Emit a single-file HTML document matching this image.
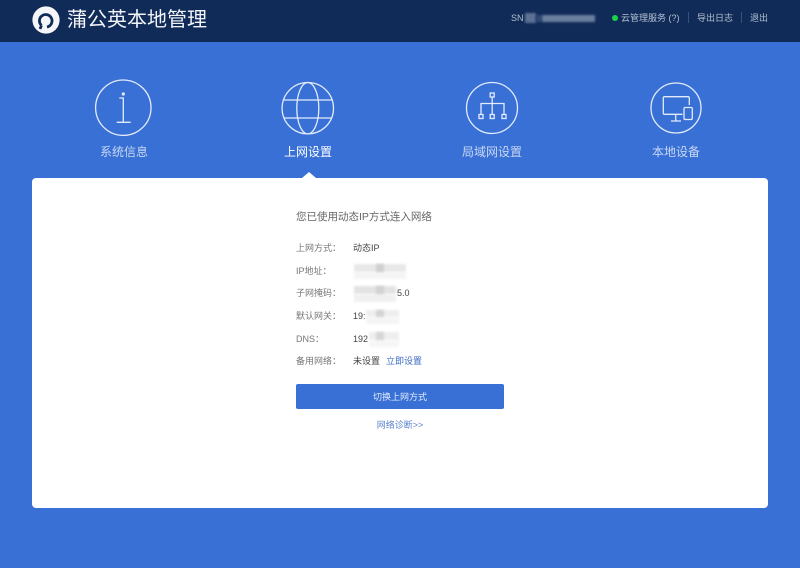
<!DOCTYPE html>
<html lang="zh-CN"><head><meta charset="utf-8"><title>蒲公英本地管理</title>
<style>
html,body{margin:0;padding:0}
body{width:800px;height:568px;position:relative;overflow:hidden;background:#3970d6;font-family:"Liberation Sans","Noto Sans CJK SC",sans-serif}
.a{position:absolute;white-space:nowrap}
#h{position:absolute;left:0;top:0;width:800px;height:42px;background:#102b57}
.t{font-size:9px;line-height:12px;color:#b4c0d2;filter:blur(.3px)}
.sep{position:absolute;top:12px;width:1px;height:11px;background:#3a5078}
.nav{font-size:12px;line-height:16px;color:#c9d8f3;text-align:center;width:120px;filter:blur(.3px)}
.l{font-size:9px;line-height:12px;color:#777;left:296px;filter:blur(.25px)}
.v{font-size:9px;line-height:12px;color:#444;left:353px;filter:blur(.25px)}
.m{position:absolute;filter:blur(1px)}
svg{position:absolute;overflow:visible}
</style></head><body>
<div id="h"></div>
<svg style="left:32px;top:6px" width="28" height="28" viewBox="0 0 28 28"><circle cx="14" cy="14" r="13.600" fill="#f4f6f9"/><path d="M9.500 19.500A6.300 6.300 0 1 1 15 21M9.500 19.500L8 23" fill="none" stroke="#102b57" stroke-width="2.800"/></svg>
<div class="a" style="left:67px;top:7px;font-size:20px;line-height:26px;color:#f2f4f8;filter:blur(.3px)">蒲公英本地管理</div>
<div class="a t" style="left:511px;top:12px">SN</div>
<div class="m" style="left:525px;top:13px;width:11px;height:10px;background:#5d7194"></div>
<div class="m" style="left:536px;top:15px;width:6px;height:7px;background:#2f4a75"></div>
<div class="m" style="left:542px;top:15px;width:53px;height:7px;background:#6a7e9e"></div>
<div class="a" style="left:612px;top:15px;width:6px;height:6px;border-radius:50%;background:#1fd14a"></div>
<div class="a t" style="left:621px;top:12px">云管理服务 (?)</div>
<div class="sep" style="left:688px"></div>
<div class="a t" style="left:697px;top:12px">导出日志</div>
<div class="sep" style="left:741px"></div>
<div class="a t" style="left:750px;top:12px">退出</div>

<svg style="left:0;top:0" width="800" height="178" fill="none" stroke="#e3ebfa" stroke-width="1.300">
<circle cx="123.300" cy="107.700" r="27.700"/>
<circle cx="123.300" cy="94" r="1.600" fill="#e3ebfa" stroke="none"/>
<path d="M119.300 98H123.300V122.300M116.700 122.300H130.700"/>
<circle cx="307.800" cy="108.200" r="25.700"/>
<ellipse cx="307.800" cy="108.200" rx="11" ry="25.700"/>
<path d="M283.600 100H332M284.300 118H331.300"/>
<circle cx="492" cy="108" r="25.500"/>
<rect x="490.200" y="93" width="4" height="4"/><path d="M492.200 97V114.500M481 114.500V103.500H504V114.500"/>
<rect x="479" y="114.500" width="4" height="4"/><rect x="490.200" y="114.500" width="4" height="4"/><rect x="502" y="114.500" width="4" height="4"/>
<circle cx="676" cy="108" r="25"/>
<path d="M689.300 105V98A1.300 1.300 0 0 0 688 96.700H664.600A1.300 1.300 0 0 0 663.300 98V113A1.300 1.300 0 0 0 664.600 114.300H682.500M675.700 114.300V121M671 121H681"/>
<rect x="684" y="107.500" width="8.300" height="12" rx="1.200"/>
</svg>
<div class="a nav" style="left:64px;top:144px">系统信息</div>
<div class="a nav" style="left:248px;top:144px;color:#fff">上网设置</div>
<div class="a nav" style="left:432px;top:144px">局域网设置</div>
<div class="a nav" style="left:616px;top:144px">本地设备</div>
<div class="a" style="left:302px;top:172px;width:0;height:0;border:7px solid transparent;border-top:0;border-bottom:6px solid #fff"></div>

<div class="a" style="left:32px;top:178px;width:736px;height:330px;background:#fff;border-radius:4px"></div>
<div class="a" style="left:296px;top:210px;font-size:10.500px;line-height:14px;color:#666;filter:blur(.25px)">您已使用动态IP方式连入网络</div>
<div class="a l" style="top:242px">上网方式：</div><div class="a v" style="top:242px">动态IP</div>
<div class="a l" style="top:265px">IP地址：</div>
<div class="m" style="left:354px;top:264px;width:52px;height:8px;background:#e8e8e8"></div>
<div class="m" style="left:354px;top:272px;width:52px;height:7px;background:#f4f4f4"></div>
<div class="m" style="left:376px;top:264px;width:8px;height:8px;background:#d0d0d0"></div>
<div class="a l" style="top:287px">子网掩码：</div>
<div class="m" style="left:354px;top:286px;width:42px;height:8px;background:#e3e3e3"></div>
<div class="m" style="left:354px;top:294px;width:42px;height:8px;background:#f0f0f0"></div>
<div class="m" style="left:376px;top:286px;width:8px;height:8px;background:#d2d2d2"></div>
<div class="a v" style="left:397px;top:287px">5.0</div>
<div class="a l" style="top:310px">默认网关：</div><div class="a v" style="top:310px">19:</div>
<div class="m" style="left:366px;top:310px;width:33px;height:7px;background:#eeeeee"></div>
<div class="m" style="left:366px;top:317px;width:33px;height:7px;background:#f5f5f5"></div>
<div class="m" style="left:376px;top:310px;width:8px;height:7px;background:#d4d4d4"></div>
<div class="a l" style="top:333px">DNS：</div><div class="a v" style="top:333px">192</div>
<div class="m" style="left:369px;top:332px;width:30px;height:8px;background:#eeeeee"></div>
<div class="m" style="left:369px;top:340px;width:30px;height:7px;background:#f6f6f6"></div>
<div class="m" style="left:376px;top:332px;width:8px;height:8px;background:#d6d6d6"></div>
<div class="a l" style="top:355px">备用网络：</div><div class="a v" style="top:355px">未设置</div>
<div class="a v" style="left:386px;top:355px;color:#3c6cc4">立即设置</div>
<div class="a" style="left:296px;top:384px;width:208px;height:25px;background:#3970d6;border-radius:2px;text-align:center;font-size:9px;line-height:27px;color:#e4ecfa">切换上网方式</div>
<div class="a" style="left:296px;top:419px;width:208px;text-align:center;font-size:9px;line-height:12px;color:#5c84cf;filter:blur(.25px)">网络诊断&gt;&gt;</div>
</body></html>
